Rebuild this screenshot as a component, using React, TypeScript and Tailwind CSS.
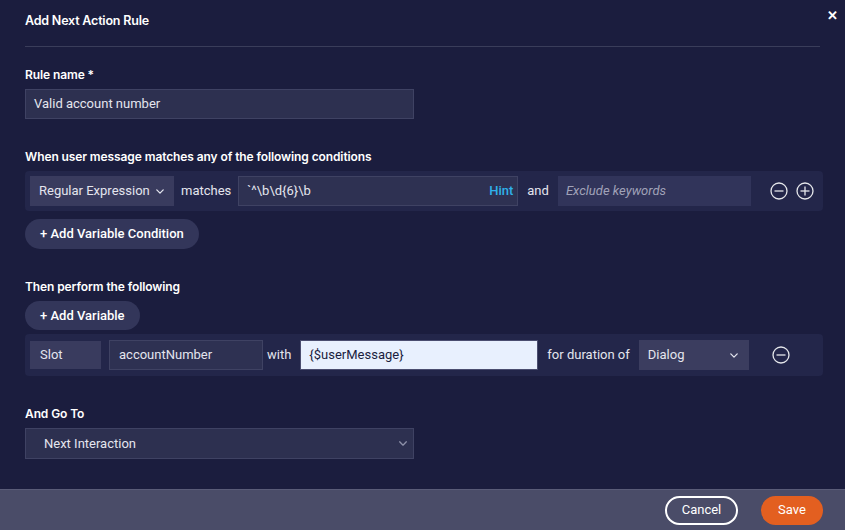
import React from "react";

function ChevronDown({ className = "" }: { className?: string }) {
  return (
    <svg viewBox="0 0 10 6" className={className} fill="none" stroke="currentColor" strokeWidth={1.6}>
      <path d="M1 1l4 4 4-4" strokeLinecap="round" strokeLinejoin="round" />
    </svg>
  );
}

function CircleIcon({ plus = false }: { plus?: boolean }) {
  return (
    <svg viewBox="0 0 18 18" className="h-[18px] w-[18px]" fill="none" stroke="#e5e7eb" strokeWidth={1.3}>
      <circle cx="9" cy="9" r="8" />
      <path d="M4.5 9h9" />
      {plus && <path d="M9 4.5v9" />}
    </svg>
  );
}

function Label({ children, className = "" }: { children: React.ReactNode; className?: string }) {
  return (
    <div className={`font-['Inter'] text-[12px] font-semibold leading-[16px] tracking-[-0.1px] text-white ${className}`}>
      {children}
    </div>
  );
}

export default function App() {
  return (
    <div className="flex h-[530px] w-[845px] flex-col bg-[#1b1d3e] font-['Roboto',sans-serif] text-[13px] text-[#e4e5ee]">
      <div className="relative flex-1 px-[25px]">
        <div className="flex h-[47px] items-center border-b border-[#3a3d5a] pb-[4px]">
          <span className="font-['Inter'] text-[12.5px] font-semibold tracking-[-0.2px] text-white">Add Next Action Rule</span>
        </div>
        <button className="absolute right-[7px] top-[9px] text-[13px] font-bold leading-none text-white">✕</button>

        <Label className="mt-[20px]">Rule name *</Label>
        <div className="mt-[6px] flex h-[30px] w-[389px] items-center border border-[#3f4263] bg-[#2d3050] px-[8px] text-[13px]">
          Valid account number
        </div>

        <Label className="mt-[30px]">When user message matches any of the following conditions</Label>
        <div className="mt-[6px] flex h-[40px] w-[798px] items-center rounded-[4px] bg-[#23264a] pl-[5px]">
          <div className="flex h-[30px] w-[144px] items-center justify-between bg-[#393b5e] pl-[9px] pr-[10px]">
            <span>Regular Expression</span>
            <ChevronDown className="h-[5px] w-[8px]" />
          </div>
          <span className="ml-[7px]">matches</span>
          <div className="ml-[7px] flex h-[30px] w-[280px] items-center justify-between border border-[#3f4263] bg-[#2e3152] pl-[8px] pr-[4px] text-[13px]">
            <span>`^\b\d&#123;6&#125;\b</span>
            <span className="font-medium text-[#2fb1ea]">Hint</span>
          </div>
          <span className="ml-[9px]">and</span>
          <div className="ml-[9px] flex h-[30px] w-[193px] items-center bg-[#31345a] px-[8px] italic text-[#a0a2b8]">
            Exclude keywords
          </div>
          <div className="ml-[19px] flex items-center gap-[8px]">
            <CircleIcon />
            <CircleIcon plus />
          </div>
        </div>

        <button className="mt-[8px] flex h-[30px] items-center rounded-full bg-[#33365a] px-[15px] text-[13px] font-medium text-white">
          + Add Variable Condition
        </button>

        <Label className="mt-[30px]">Then perform the following</Label>
        <button className="mt-[6px] flex h-[29px] items-center rounded-full bg-[#33365a] px-[15px] text-[13px] font-medium text-white">
          + Add Variable
        </button>
        <div className="mt-[4px] flex h-[42px] w-[798px] items-center rounded-[4px] bg-[#23264a] pl-[5px]">
          <div className="flex h-[28px] w-[71px] items-center bg-[#393b5e] px-[10px]">Slot</div>
          <div className="ml-[8px] flex h-[30px] w-[154px] items-center border border-[#3f4263] bg-[#2e3152] px-[9px]">
            accountNumber
          </div>
          <span className="ml-[4px]">with</span>
          <div className="ml-[9px] flex h-[30px] w-[238px] items-center border border-[#4a4d70] bg-[#e8f0fe] px-[8px] text-[#1b1d3e]">
            &#123;$userMessage&#125;
          </div>
          <span className="ml-[9px]">for duration of</span>
          <div className="ml-[9px] flex h-[30px] w-[110px] items-center justify-between bg-[#3b3d5f] pl-[9px] pr-[11px]">
            <span>Dialog</span>
            <ChevronDown className="h-[5px] w-[8px]" />
          </div>
          <div className="ml-[23px]">
            <CircleIcon />
          </div>
        </div>

        <Label className="mt-[30px]">And Go To</Label>
        <div className="mt-[6px] flex h-[31px] w-[389px] items-center justify-between border border-[#3f4263] bg-[#2d3050] pl-[18px] pr-[5px]">
          <span>Next Interaction</span>
          <ChevronDown className="h-[5px] w-[10px] text-[#8d90a8]" />
        </div>
      </div>

      <div className="flex h-[41px] items-center justify-end gap-[23px] border-t border-[#5a5c78] bg-[#4a4c68] pr-[22px]">
        <button className="flex h-[29px] w-[73px] items-center justify-center rounded-full border-2 border-white text-[13px] text-white">
          Cancel
        </button>
        <button className="flex h-[29px] w-[62px] items-center justify-center rounded-full bg-[#e35f20] text-[13px] text-white">
          Save
        </button>
      </div>
    </div>
  );
}
